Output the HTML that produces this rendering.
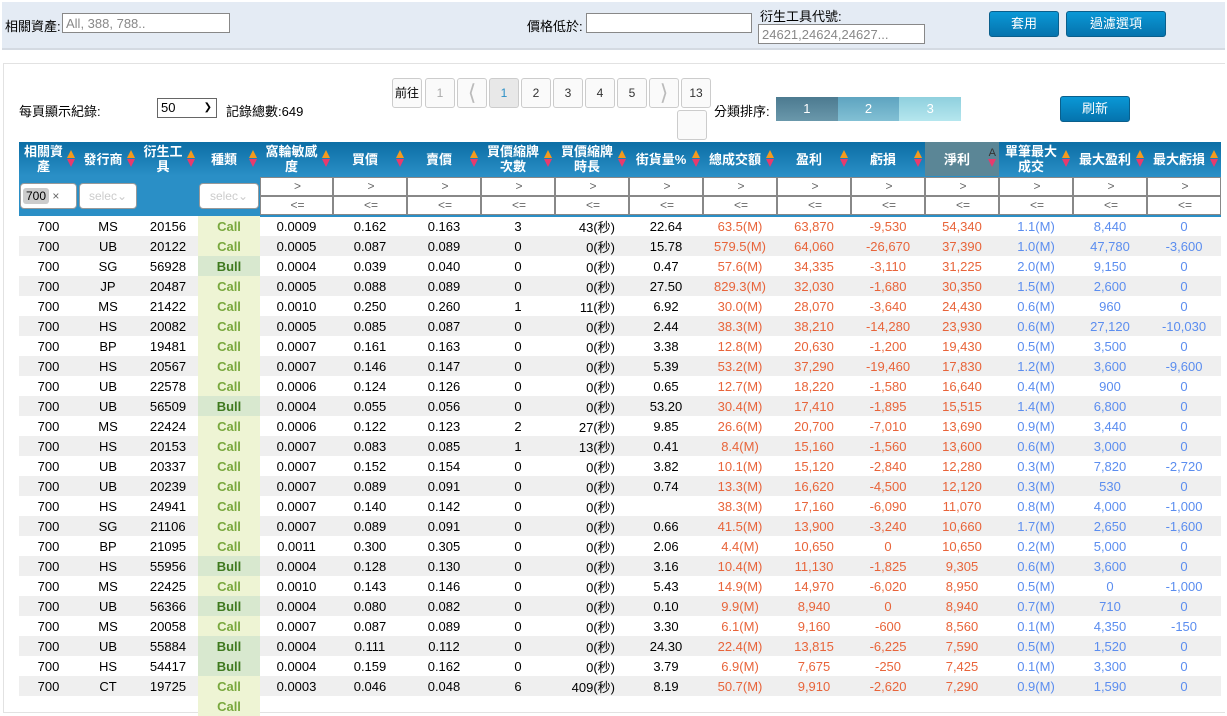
<!DOCTYPE html>
<html><head><meta charset="utf-8">
<style>
*{box-sizing:border-box;margin:0;padding:0}
body{width:1227px;height:703px;overflow:hidden;background:#fff;font-family:"Liberation Sans","Noto Sans CJK TC",sans-serif;font-size:13px;color:#000;position:relative}
.abs{position:absolute}
.top{left:2px;top:2px;width:1223px;height:48px;background:#e4ebf4;border-bottom:2px solid #d4dae2}
.inp{position:absolute;background:#fff;border:1px solid #888;height:20px;font-size:13px;color:#888;padding:1px 3px;line-height:17px}
.btn{position:absolute;background:linear-gradient(#0a98d6,#0573ad);color:#fff;border:1px solid #0a5f8c;border-radius:3px;text-align:center;font-size:13px;line-height:24px;height:26px}
.panel{left:3px;top:63px;width:1222px;height:650px;border:1px solid #e2e2e2;border-right:none}
.pg{position:absolute;top:78px;height:30px;width:30px;border:1px solid #ccc;border-radius:3px;background:#fafafa;text-align:center;line-height:28px;font-size:12px;color:#333}
table{position:absolute;left:19px;top:142px;border-collapse:collapse;table-layout:fixed;width:1202px}
th{background:linear-gradient(#0c6ea5,#2a8fc6);color:#fff;font-size:13px;font-weight:bold;height:34px;line-height:15px;position:relative;padding-right:10px;text-align:center;vertical-align:middle}
th.net{background:#5b8696}
th i{position:absolute;right:3px;top:8px;width:0;height:0;border-left:4px solid transparent;border-right:4px solid transparent;border-bottom:8px solid #f59a1c}
th b{position:absolute;right:3px;top:17px;width:0;height:0;border-left:4px solid transparent;border-right:4px solid transparent;border-top:8px solid #e83a6e}
tr.f td{background:#2a8fc6;height:20px;padding:0}
tr.f2 td{border-bottom:2px solid #2a8fc6}
.fi{background:#fff;border:1px solid #888;height:19px;width:100%;font-size:12px;color:#666;line-height:17px;padding-left:2px}
td{height:20px;text-align:center;white-space:nowrap;font-size:13px}
tbody tr:nth-child(even) td{background:#efefef}
.c{color:#79a83e;font-weight:bold;background:#eef4d4!important}
.u{color:#3f7a1f;font-weight:bold;background:#d8e8cf!important}
.r{text-align:right;padding-right:14px}
.o{color:#e8643a}
.bl{color:#5b8def}
</style></head><body>
<div class="abs top"></div>
<div class="abs" style="left:5px;top:16px">相關資產:</div>
<div class="inp" style="left:62px;top:13px;width:168px">All, 388, 788..</div>
<div class="abs" style="left:527px;top:16px">價格低於:</div>
<div class="inp" style="left:586px;top:13px;width:166px"></div>
<div class="abs" style="left:760px;top:6px">衍生工具代號:</div>
<div class="inp" style="left:758px;top:24px;width:167px">24621,24624,24627...</div>
<div class="btn" style="left:989px;top:11px;width:70px">套用</div>
<div class="btn" style="left:1066px;top:11px;width:100px">過濾選項</div>

<div class="abs panel"></div>
<div class="abs" style="left:19px;top:101px">每頁顯示紀錄:</div>
<div class="abs" style="left:157px;top:98px;width:60px;height:20px;border:1px solid #666;padding-left:3px;line-height:18px">50<span style="position:absolute;right:4px;font-size:10px">&#10095;</span></div>
<div class="abs" style="left:226px;top:101px">記錄總數:649</div>
<div class="pg" style="left:392px;color:#000">前往</div>
<div class="pg" style="left:425px;color:#aaa">1</div>
<div class="pg" style="left:457px;color:#bbb;font-size:22px">&lang;</div>
<div class="pg" style="left:489px;background:#e8e8e8;color:#2a8fc6">1</div>
<div class="pg" style="left:521px">2</div>
<div class="pg" style="left:553px">3</div>
<div class="pg" style="left:585px">4</div>
<div class="pg" style="left:617px">5</div>
<div class="pg" style="left:649px;color:#bbb;font-size:22px">&rang;</div>
<div class="pg" style="left:681px">13</div>
<div class="pg" style="left:677px;top:110px"></div>
<div class="abs" style="left:714px;top:101px">分類排序:</div>
<div class="abs" style="left:776px;top:97px;width:185px;height:24px;display:flex;color:#fff;line-height:24px;text-align:center">
<div style="flex:1;background:linear-gradient(#4c7a90,#6a98ab)">1</div><div style="flex:1;background:linear-gradient(#5ea4c0,#82c0d4)">2</div><div style="flex:1;background:linear-gradient(#8fd0de,#b5e6ee)">3</div></div>
<div class="btn" style="left:1060px;top:96px;width:70px">刷新</div>

<table>
<colgroup><col style="width:59px"><col style="width:60px"><col style="width:60px"><col style="width:62px"><col style="width:73px"><col span="12" style="width:74px"></colgroup>
<thead>
<tr><th>相關資產<i></i><b></b></th><th>發行商<i></i><b></b></th><th>衍生工具<i></i><b></b></th><th>種類<i></i><b></b></th><th>窩輪敏感<br>度<i></i><b></b></th><th>買價<i></i><b></b></th><th>賣價<i></i><b></b></th><th>買價縮牌<br>次數<i></i><b></b></th><th>買價縮牌<br>時長<i></i><b></b></th><th>街貨量%<i></i><b></b></th><th>總成交額<i></i><b></b></th><th>盈利<i></i><b></b></th><th>虧損<i></i><b></b></th><th class="net">淨利<span style="position:absolute;right:3px;top:4px;color:#333;font-weight:normal;font-size:11px">A</span><b></b></th><th>單筆最大<br>成交<i></i><b></b></th><th>最大盈利<i></i><b></b></th><th>最大虧損<i></i><b></b></th></tr>
<tr class="f"><td rowspan="2" style="padding:0 1px"><div style="background:#fff;border:1px solid #999;border-radius:4px;height:26px;line-height:24px;text-align:left;padding-left:2px;font-size:12px"><span style="background:#ccc;padding:1px 3px;border-radius:3px">700</span> <span style="color:#666">&#215;</span></div></td><td rowspan="2" style="padding:0 1px"><div style="background:#fff;border:1px solid #999;border-radius:4px;height:26px;line-height:24px;color:#ccc;font-size:12px">selec&#8964;</div></td><td rowspan="2"></td><td rowspan="2" style="padding:0 1px"><div style="background:#fff;border:1px solid #999;border-radius:4px;height:26px;line-height:24px;color:#ccc;font-size:12px">selec&#8964;</div></td>
<td><div class="fi">&gt;</div></td><td><div class="fi">&gt;</div></td><td><div class="fi">&gt;</div></td><td><div class="fi">&gt;</div></td><td><div class="fi">&gt;</div></td><td><div class="fi">&gt;</div></td><td><div class="fi">&gt;</div></td><td><div class="fi">&gt;</div></td><td><div class="fi">&gt;</div></td><td><div class="fi">&gt;</div></td><td><div class="fi">&gt;</div></td><td><div class="fi">&gt;</div></td><td><div class="fi">&gt;</div></td></tr>
<tr class="f f2"><td><div class="fi">&lt;=</div></td><td><div class="fi">&lt;=</div></td><td><div class="fi">&lt;=</div></td><td><div class="fi">&lt;=</div></td><td><div class="fi">&lt;=</div></td><td><div class="fi">&lt;=</div></td><td><div class="fi">&lt;=</div></td><td><div class="fi">&lt;=</div></td><td><div class="fi">&lt;=</div></td><td><div class="fi">&lt;=</div></td><td><div class="fi">&lt;=</div></td><td><div class="fi">&lt;=</div></td><td><div class="fi">&lt;=</div></td></tr>
</thead>
<tbody>
<tr><td>700</td><td>MS</td><td>20156</td><td class="c">Call</td><td>0.0009</td><td>0.162</td><td>0.163</td><td>3</td><td class="r">43(秒)</td><td>22.64</td><td class="o">63.5(M)</td><td class="o">63,870</td><td class="o">-9,530</td><td class="o">54,340</td><td class="bl">1.1(M)</td><td class="bl">8,440</td><td class="bl">0</td></tr>
<tr><td>700</td><td>UB</td><td>20122</td><td class="c">Call</td><td>0.0005</td><td>0.087</td><td>0.089</td><td>0</td><td class="r">0(秒)</td><td>15.78</td><td class="o">579.5(M)</td><td class="o">64,060</td><td class="o">-26,670</td><td class="o">37,390</td><td class="bl">1.0(M)</td><td class="bl">47,780</td><td class="bl">-3,600</td></tr>
<tr><td>700</td><td>SG</td><td>56928</td><td class="u">Bull</td><td>0.0004</td><td>0.039</td><td>0.040</td><td>0</td><td class="r">0(秒)</td><td>0.47</td><td class="o">57.6(M)</td><td class="o">34,335</td><td class="o">-3,110</td><td class="o">31,225</td><td class="bl">2.0(M)</td><td class="bl">9,150</td><td class="bl">0</td></tr>
<tr><td>700</td><td>JP</td><td>20487</td><td class="c">Call</td><td>0.0005</td><td>0.088</td><td>0.089</td><td>0</td><td class="r">0(秒)</td><td>27.50</td><td class="o">829.3(M)</td><td class="o">32,030</td><td class="o">-1,680</td><td class="o">30,350</td><td class="bl">1.5(M)</td><td class="bl">2,600</td><td class="bl">0</td></tr>
<tr><td>700</td><td>MS</td><td>21422</td><td class="c">Call</td><td>0.0010</td><td>0.250</td><td>0.260</td><td>1</td><td class="r">11(秒)</td><td>6.92</td><td class="o">30.0(M)</td><td class="o">28,070</td><td class="o">-3,640</td><td class="o">24,430</td><td class="bl">0.6(M)</td><td class="bl">960</td><td class="bl">0</td></tr>
<tr><td>700</td><td>HS</td><td>20082</td><td class="c">Call</td><td>0.0005</td><td>0.085</td><td>0.087</td><td>0</td><td class="r">0(秒)</td><td>2.44</td><td class="o">38.3(M)</td><td class="o">38,210</td><td class="o">-14,280</td><td class="o">23,930</td><td class="bl">0.6(M)</td><td class="bl">27,120</td><td class="bl">-10,030</td></tr>
<tr><td>700</td><td>BP</td><td>19481</td><td class="c">Call</td><td>0.0007</td><td>0.161</td><td>0.163</td><td>0</td><td class="r">0(秒)</td><td>3.38</td><td class="o">12.8(M)</td><td class="o">20,630</td><td class="o">-1,200</td><td class="o">19,430</td><td class="bl">0.5(M)</td><td class="bl">3,500</td><td class="bl">0</td></tr>
<tr><td>700</td><td>HS</td><td>20567</td><td class="c">Call</td><td>0.0007</td><td>0.146</td><td>0.147</td><td>0</td><td class="r">0(秒)</td><td>5.39</td><td class="o">53.2(M)</td><td class="o">37,290</td><td class="o">-19,460</td><td class="o">17,830</td><td class="bl">1.2(M)</td><td class="bl">3,600</td><td class="bl">-9,600</td></tr>
<tr><td>700</td><td>UB</td><td>22578</td><td class="c">Call</td><td>0.0006</td><td>0.124</td><td>0.126</td><td>0</td><td class="r">0(秒)</td><td>0.65</td><td class="o">12.7(M)</td><td class="o">18,220</td><td class="o">-1,580</td><td class="o">16,640</td><td class="bl">0.4(M)</td><td class="bl">900</td><td class="bl">0</td></tr>
<tr><td>700</td><td>UB</td><td>56509</td><td class="u">Bull</td><td>0.0004</td><td>0.055</td><td>0.056</td><td>0</td><td class="r">0(秒)</td><td>53.20</td><td class="o">30.4(M)</td><td class="o">17,410</td><td class="o">-1,895</td><td class="o">15,515</td><td class="bl">1.4(M)</td><td class="bl">6,800</td><td class="bl">0</td></tr>
<tr><td>700</td><td>MS</td><td>22424</td><td class="c">Call</td><td>0.0006</td><td>0.122</td><td>0.123</td><td>2</td><td class="r">27(秒)</td><td>9.85</td><td class="o">26.6(M)</td><td class="o">20,700</td><td class="o">-7,010</td><td class="o">13,690</td><td class="bl">0.9(M)</td><td class="bl">3,440</td><td class="bl">0</td></tr>
<tr><td>700</td><td>HS</td><td>20153</td><td class="c">Call</td><td>0.0007</td><td>0.083</td><td>0.085</td><td>1</td><td class="r">13(秒)</td><td>0.41</td><td class="o">8.4(M)</td><td class="o">15,160</td><td class="o">-1,560</td><td class="o">13,600</td><td class="bl">0.6(M)</td><td class="bl">3,000</td><td class="bl">0</td></tr>
<tr><td>700</td><td>UB</td><td>20337</td><td class="c">Call</td><td>0.0007</td><td>0.152</td><td>0.154</td><td>0</td><td class="r">0(秒)</td><td>3.82</td><td class="o">10.1(M)</td><td class="o">15,120</td><td class="o">-2,840</td><td class="o">12,280</td><td class="bl">0.3(M)</td><td class="bl">7,820</td><td class="bl">-2,720</td></tr>
<tr><td>700</td><td>UB</td><td>20239</td><td class="c">Call</td><td>0.0007</td><td>0.089</td><td>0.091</td><td>0</td><td class="r">0(秒)</td><td>0.74</td><td class="o">13.3(M)</td><td class="o">16,620</td><td class="o">-4,500</td><td class="o">12,120</td><td class="bl">0.3(M)</td><td class="bl">530</td><td class="bl">0</td></tr>
<tr><td>700</td><td>HS</td><td>24941</td><td class="c">Call</td><td>0.0007</td><td>0.140</td><td>0.142</td><td>0</td><td class="r">0(秒)</td><td></td><td class="o">38.3(M)</td><td class="o">17,160</td><td class="o">-6,090</td><td class="o">11,070</td><td class="bl">0.8(M)</td><td class="bl">4,000</td><td class="bl">-1,000</td></tr>
<tr><td>700</td><td>SG</td><td>21106</td><td class="c">Call</td><td>0.0007</td><td>0.089</td><td>0.091</td><td>0</td><td class="r">0(秒)</td><td>0.66</td><td class="o">41.5(M)</td><td class="o">13,900</td><td class="o">-3,240</td><td class="o">10,660</td><td class="bl">1.7(M)</td><td class="bl">2,650</td><td class="bl">-1,600</td></tr>
<tr><td>700</td><td>BP</td><td>21095</td><td class="c">Call</td><td>0.0011</td><td>0.300</td><td>0.305</td><td>0</td><td class="r">0(秒)</td><td>2.06</td><td class="o">4.4(M)</td><td class="o">10,650</td><td class="o">0</td><td class="o">10,650</td><td class="bl">0.2(M)</td><td class="bl">5,000</td><td class="bl">0</td></tr>
<tr><td>700</td><td>HS</td><td>55956</td><td class="u">Bull</td><td>0.0004</td><td>0.128</td><td>0.130</td><td>0</td><td class="r">0(秒)</td><td>3.16</td><td class="o">10.4(M)</td><td class="o">11,130</td><td class="o">-1,825</td><td class="o">9,305</td><td class="bl">0.6(M)</td><td class="bl">3,600</td><td class="bl">0</td></tr>
<tr><td>700</td><td>MS</td><td>22425</td><td class="c">Call</td><td>0.0010</td><td>0.143</td><td>0.146</td><td>0</td><td class="r">0(秒)</td><td>5.43</td><td class="o">14.9(M)</td><td class="o">14,970</td><td class="o">-6,020</td><td class="o">8,950</td><td class="bl">0.5(M)</td><td class="bl">0</td><td class="bl">-1,000</td></tr>
<tr><td>700</td><td>UB</td><td>56366</td><td class="u">Bull</td><td>0.0004</td><td>0.080</td><td>0.082</td><td>0</td><td class="r">0(秒)</td><td>0.10</td><td class="o">9.9(M)</td><td class="o">8,940</td><td class="o">0</td><td class="o">8,940</td><td class="bl">0.7(M)</td><td class="bl">710</td><td class="bl">0</td></tr>
<tr><td>700</td><td>MS</td><td>20058</td><td class="c">Call</td><td>0.0007</td><td>0.087</td><td>0.089</td><td>0</td><td class="r">0(秒)</td><td>3.30</td><td class="o">6.1(M)</td><td class="o">9,160</td><td class="o">-600</td><td class="o">8,560</td><td class="bl">0.1(M)</td><td class="bl">4,350</td><td class="bl">-150</td></tr>
<tr><td>700</td><td>UB</td><td>55884</td><td class="u">Bull</td><td>0.0004</td><td>0.111</td><td>0.112</td><td>0</td><td class="r">0(秒)</td><td>24.30</td><td class="o">22.4(M)</td><td class="o">13,815</td><td class="o">-6,225</td><td class="o">7,590</td><td class="bl">0.5(M)</td><td class="bl">1,520</td><td class="bl">0</td></tr>
<tr><td>700</td><td>HS</td><td>54417</td><td class="u">Bull</td><td>0.0004</td><td>0.159</td><td>0.162</td><td>0</td><td class="r">0(秒)</td><td>3.79</td><td class="o">6.9(M)</td><td class="o">7,675</td><td class="o">-250</td><td class="o">7,425</td><td class="bl">0.1(M)</td><td class="bl">3,300</td><td class="bl">0</td></tr>
<tr><td>700</td><td>CT</td><td>19725</td><td class="c">Call</td><td>0.0003</td><td>0.046</td><td>0.048</td><td>6</td><td class="r">409(秒)</td><td>8.19</td><td class="o">50.7(M)</td><td class="o">9,910</td><td class="o">-2,620</td><td class="o">7,290</td><td class="bl">0.9(M)</td><td class="bl">1,590</td><td class="bl">0</td></tr>
<tr><td></td><td></td><td></td><td class="c">Call</td><td></td><td></td><td></td><td></td><td></td><td></td><td></td><td></td><td></td><td></td><td></td><td></td><td></td></tr>
</tbody>
</table>
</body></html>
